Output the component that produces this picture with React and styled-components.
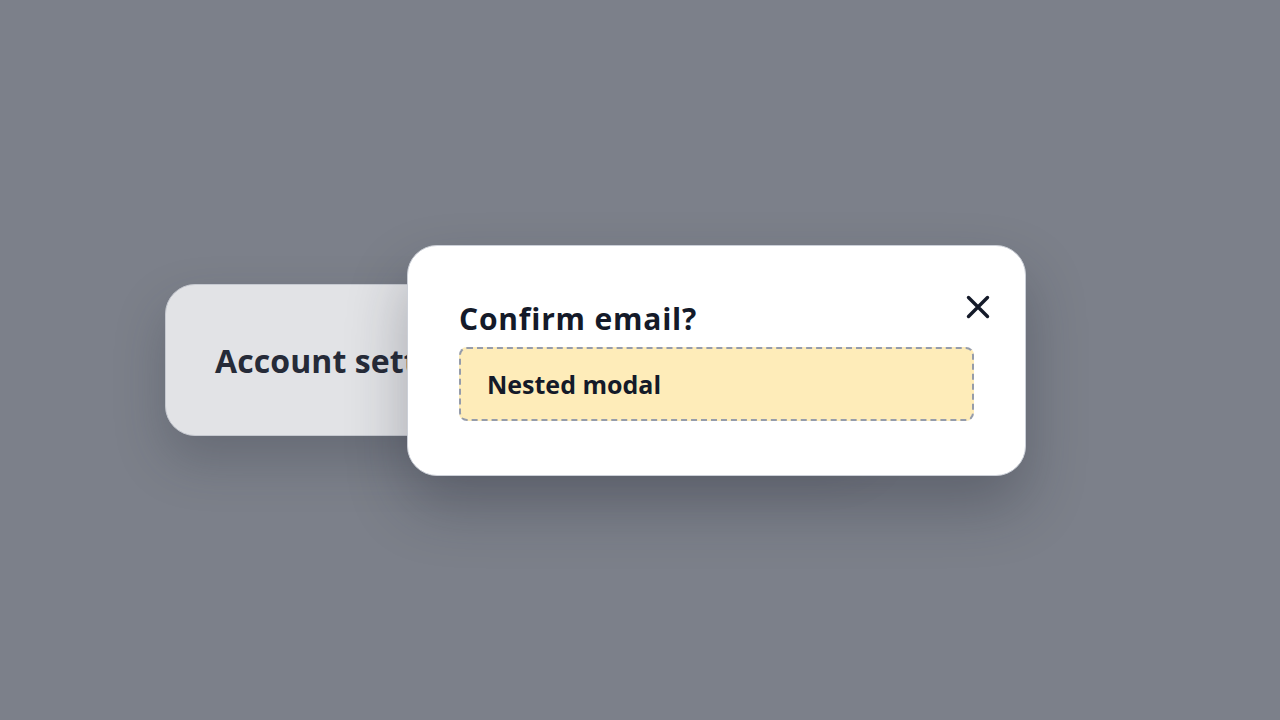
import React from "react";
import styled, { createGlobalStyle } from "styled-components";

const Global = createGlobalStyle`
  html, body { margin: 0; padding: 0; }
  body {
    background: #7c808a;
    font-family: "Open Sans", "Inter", "Liberation Sans", sans-serif;
    color: #1b2130;
  }
`;

const Scene = styled.div`
  position: relative;
  width: 1280px;
  height: 720px;
  display: flex;
  align-items: center;
  overflow: hidden;
`;

const Card = styled.section`
  box-sizing: border-box;
  margin-left: 165px;
  width: 700px;
  height: 152px;
  display: flex;
  align-items: center;
  padding: 0 49px;
  background: #e2e3e6;
  border: 1.5px solid #c6c9d0;
  border-radius: 30px;
  box-shadow: 0 24px 50px rgba(40, 44, 55, 0.25);
`;

const CardTitle = styled.h2`
  margin: 0;
  font-size: 32px;
  font-weight: 700;
  color: #262b38;
  letter-spacing: 0.1px;
`;

const Modal = styled.div`
  position: absolute;
  left: 407px;
  top: 245px;
  box-sizing: border-box;
  width: 619px;
  height: 231px;
  padding: 50px 51px 53px 51px;
  background: #ffffff;
  border: 1.5px solid #ccd0d8;
  border-radius: 30px;
  box-shadow: 0 30px 60px rgba(30, 34, 45, 0.3);
  display: flex;
  flex-direction: column;
  gap: 5px;
`;

const ModalTitle = styled.h2`
  margin: 0;
  font-size: 30px;
  line-height: 46px;
  font-weight: 700;
  color: #141a29;
  letter-spacing: 0.8px;
`;

const CloseButton = styled.button`
  position: absolute;
  top: 47px;
  right: 33px;
  width: 28px;
  height: 28px;
  padding: 0;
  border: none;
  background: transparent;
  display: flex;
  align-items: center;
  justify-content: center;
  cursor: pointer;
`;

const NestedBox = styled.div`
  box-sizing: border-box;
  height: 74px;
  display: flex;
  align-items: center;
  padding: 0 26px;
  background: #feecb9;
  border: 2px dashed #959cab;
  border-radius: 8px;
  font-size: 25px;
  font-weight: 700;
  color: #141a29;
`;

export default function App() {
  return (
    <>
      <Global />
      <Scene>
        <Card>
          <CardTitle>Account settings</CardTitle>
        </Card>
        <Modal role="dialog">
          <ModalTitle>Confirm email?</ModalTitle>
          <NestedBox>Nested modal</NestedBox>
          <CloseButton aria-label="Close">
            <svg width="24" height="24" viewBox="0 0 24 24" fill="none">
              <path
                d="M2.5 2.5 L21.5 21.5 M21.5 2.5 L2.5 21.5"
                stroke="#141a29"
                strokeWidth="3.4"
                strokeLinecap="round"
              />
            </svg>
          </CloseButton>
        </Modal>
      </Scene>
    </>
  );
}
